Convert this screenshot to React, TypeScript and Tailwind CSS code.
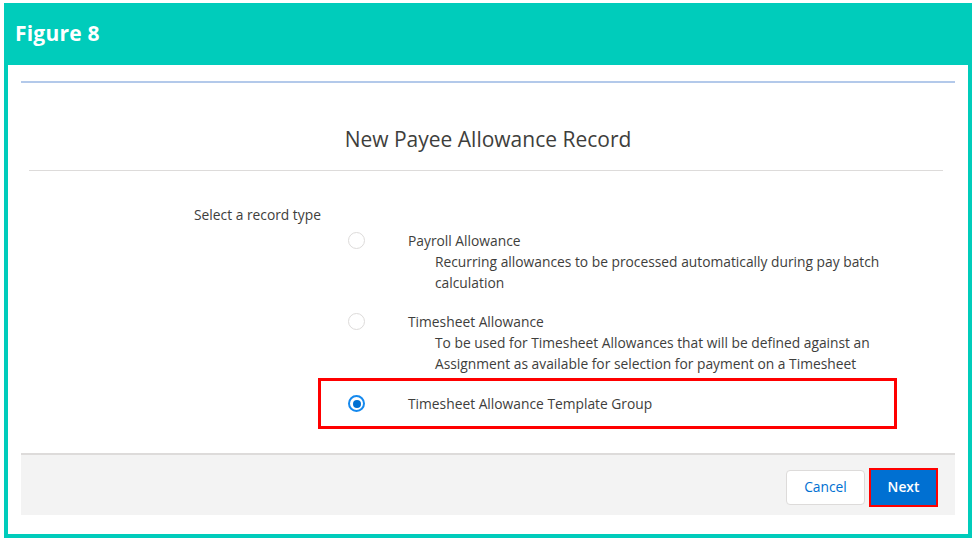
import type { ReactNode } from 'react'

const font = { fontFamily: '"Open Sans", "Noto Sans", Arial, sans-serif' }

function Radio({ checked }: { checked?: boolean }) {
  return checked ? (
    <span className="flex h-[17px] w-[17px] items-center justify-center rounded-full border-2 border-[#1589ee] bg-white">
      <span className="h-[8px] w-[8px] rounded-full bg-[#0070d2]" />
    </span>
  ) : (
    <span className="block h-[17px] w-[17px] rounded-full border border-[#dddbda] bg-white" />
  )
}

interface OptionProps {
  label: string
  checked?: boolean
  children?: ReactNode
}

function Option({ label, checked, children }: OptionProps) {
  return (
    <div className="flex">
      <div className="w-[87px] shrink-0 pl-[27px] pt-[2px]">
        <Radio checked={checked} />
      </div>
      <div>
        <p className="h-[21px] leading-[21px]">{label}</p>
        {children && <p className="w-[490px] pl-[27px] leading-[21px]">{children}</p>}
      </div>
    </div>
  )
}

export default function App() {
  return (
    <div className="h-[542px] w-full bg-white pb-[4px] pl-[4px] pr-[4px] pt-[3px]" style={font}>
      <div className="flex h-full flex-col">
        <div className="flex h-[62px] items-center bg-[#00ccbb] px-[11px]">
          <h1 className="text-[21px] font-bold tracking-[0.2px] text-white">Figure 8</h1>
        </div>

        <div className="flex flex-1 flex-col border-x-4 border-b-4 border-[#00ccbb] px-[13px]">
          <div className="mt-[16px] h-[2px] bg-[#b3c9ea]" />

          <h2 className="mt-[42px] text-center text-[21px] leading-[28px] text-[#3e3e3c]">
            New Payee Allowance Record
          </h2>
          <div className="ml-[8px] mr-[12px] mt-[17px] h-px bg-[#dddbda]" />

          <div className="text-[13.8px] text-[#3e3e3c]">
            <p className="mt-[33px] pl-[173px] leading-[21px]">Select a record type</p>

            <div className="ml-[297px] mt-[5px] w-[579px]">
              <div className="px-[3px]">
                <Option label="Payroll Allowance">
                  Recurring allowances to be processed automatically during pay batch calculation
                </Option>
                <div className="h-[18px]" />
                <Option label="Timesheet Allowance">
                  To be used for Timesheet Allowances that will be defined against an Assignment as
                  available for selection for payment on a Timesheet
                </Option>
              </div>
              <div className="mt-[4px] flex h-[51px] items-center border-[3px] border-[#ff0000]">
                <Option label="Timesheet Allowance Template Group" checked />
              </div>
            </div>
          </div>

          <div className="mt-[24px] flex h-[62px] items-center justify-end gap-[4px] border-t-2 border-[#dddbda] bg-[#f3f3f3] pr-[17px] pt-[5px]">
            <button
              type="button"
              className="h-[35px] w-[79px] rounded-[4px] border border-[#dddbda] bg-white text-[13.8px] text-[#0070d2]"
            >
              Cancel
            </button>
            <div className="border-2 border-[#ff0000]">
              <button
                type="button"
                className="block h-[35px] w-[65px] bg-[#0070d2] text-[13.8px] font-semibold text-white"
              >
                Next
              </button>
            </div>
          </div>
        </div>
      </div>
    </div>
  )
}
